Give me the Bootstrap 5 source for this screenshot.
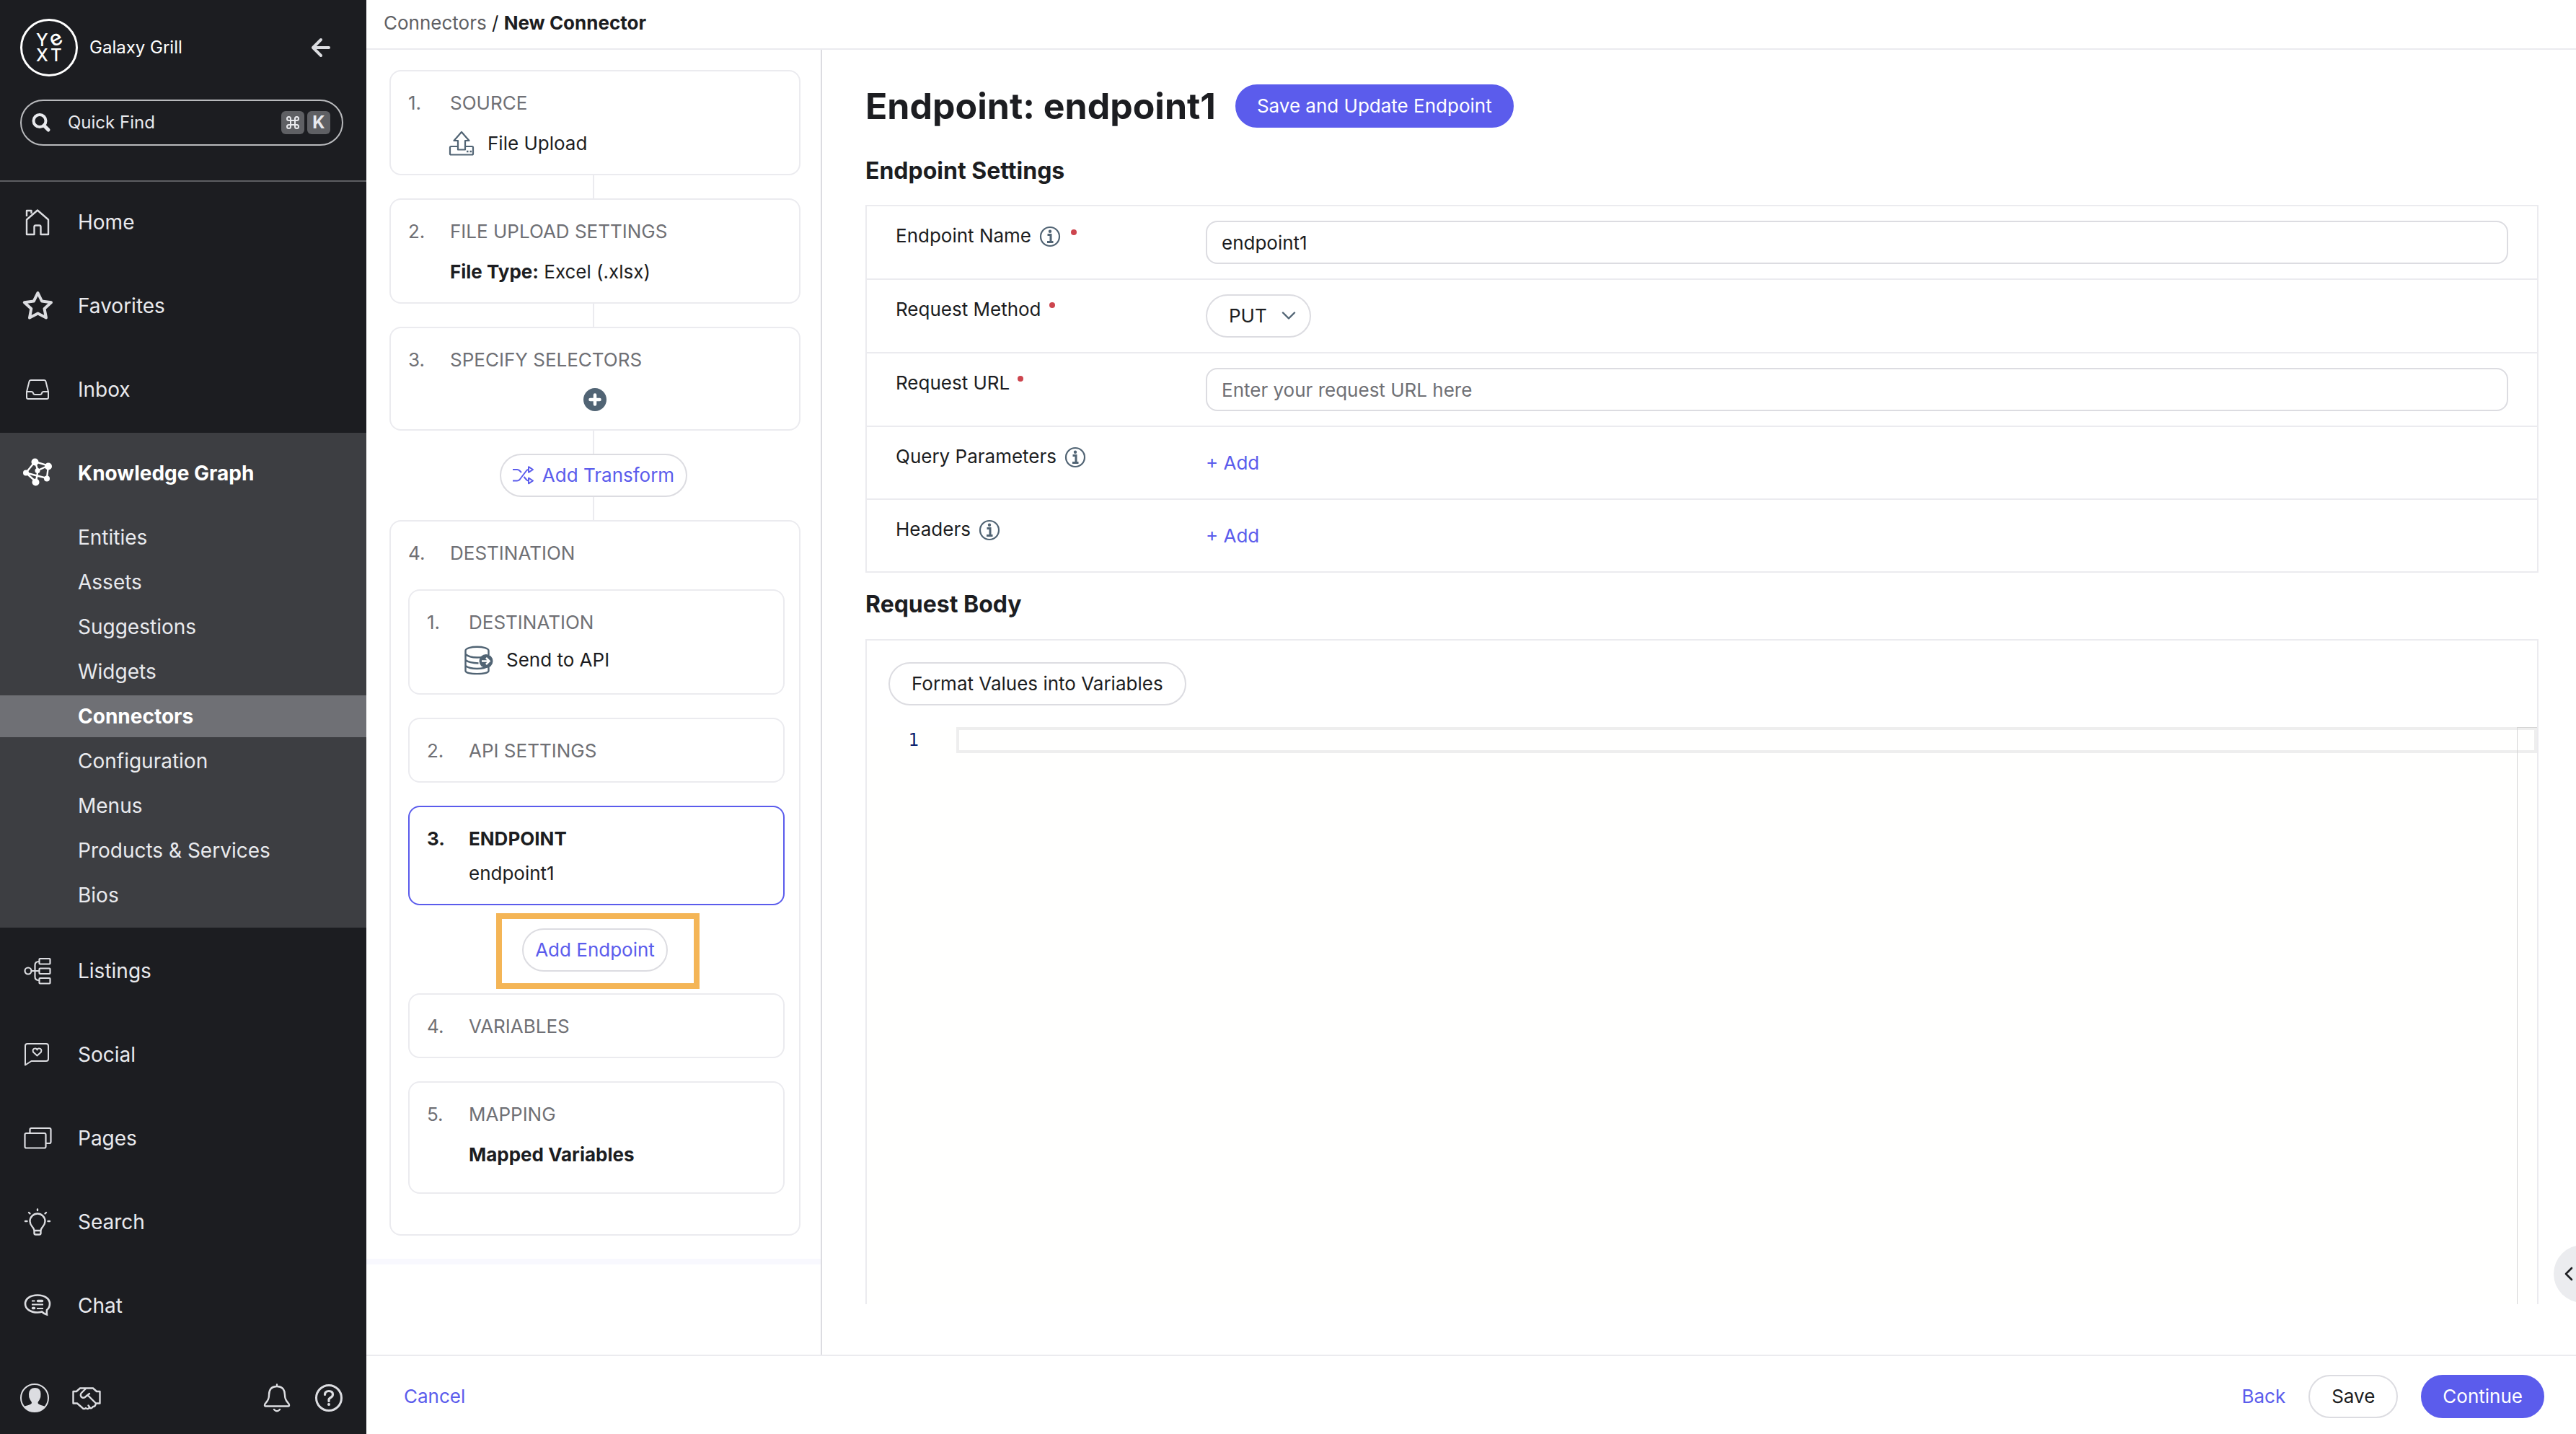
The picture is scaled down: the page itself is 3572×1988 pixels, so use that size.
<!DOCTYPE html>
<html lang="en">
<head>
<meta charset="utf-8">
<meta name="viewport" content="width=device-width, initial-scale=1">
<title>New Connector</title>
<link href="https://cdn.jsdelivr.net/npm/bootstrap@5.3.0/dist/css/bootstrap.min.css" rel="stylesheet">
<style>
:root{
  --ink:#1c1d21; --muted-ink:#6f7075; --brand:#5b5cec; --slate:#516474;
  --line:#ebebef; --line-strong:#dcdce1; --side:#1c1d21; --side-open:#3d3e42; --side-active:#6f7075; --side-ink:#e9eaee;
}
body{font-family:Inter,"Liberation Sans",sans-serif;font-size:26px;line-height:36px;color:var(--ink);background:#fff}
svg{display:block;flex:none;overflow:visible}
a{text-decoration:none}
.app-shell{min-height:100vh}

/* sidebar */
.side-panel{width:508px;background:var(--side);color:var(--side-ink)}
.side-top{padding:26px 32px 48px 28px;border-bottom:2px solid #5d5e62}
.brand-name{font-size:24px;color:#fff;margin-left:16px}
.icon-btn{background:none;border:0;padding:0;color:#dcdde1}
.quick-find{height:64px;margin-top:32px;padding:0 16px 0 14px;border:2px solid #b9babd;border-radius:32px;background:none;color:var(--side-ink);font-size:24px}
.key-cap{width:32px;height:32px;border-radius:6px;background:#5f6064;font-size:24px;line-height:32px;font-weight:700}
.side-nav{font-size:28px}
.side-link{height:112px;margin-bottom:4px;padding-left:28px;color:var(--side-ink)}
.side-link svg{width:48px;height:48px;margin-right:32px;color:#dcdde1}
.side-open{background:var(--side-open);margin-bottom:4px;padding-bottom:12px}
.side-open .side-link,.side-open .side-link svg{color:#fff}
.sub-link{height:58px;margin-bottom:4px;padding-left:108px;color:var(--side-ink)}
.sub-link.active{background:var(--side-active);color:#fff;font-weight:700}
.side-foot{padding:0 32px 30px 28px}

/* top and bottom bars */
.top-bar{height:69px;padding:0 24px 4px;border-bottom:2px solid var(--line)}
.top-bar a{color:#5f6064}
.bottom-bar{padding:26px 44px 22px 52px;border-top:2px solid var(--line)}
.bottom-actions{gap:32px}
.pill{height:60px;padding:0 30px;border:2px solid var(--line-strong);border-radius:30px;background:#fff;color:var(--ink);font-size:26px;line-height:36px}
.pill-brand{background:var(--brand);border-color:var(--brand);color:#fff;padding:0 28px}
.pill-link{color:var(--brand);padding:0 16px}
.text-action{background:none;border:0;padding:0;color:var(--brand);font-size:26px;line-height:36px}

/* steps */
.steps-col{width:632px;border-right:2px solid var(--line-strong)}
.steps-list{padding:28px 28px 32px 32px;border-bottom:8px solid #f8f8fe}
.step-card{padding:26px 24px 24px;border:2px solid var(--line);border-radius:16px;background:#fff}
.step-group{padding:26px 20px 56px 24px}
.step-card.current{border-color:var(--brand)}
.step-no{width:58px}
.step-head{color:var(--muted-ink)}
.current .step-head{color:var(--ink);font-weight:700}
.step-body{margin-top:20px;margin-left:58px;min-height:36px}
.step-body.snug{margin-top:12px}
.step-body svg{margin-right:18px}
.step-body.with-db{margin-left:52px;height:44px}
.step-body.roomy{margin-bottom:10px}
.step-add{margin-top:20px;height:34px}
.stem{height:32px;padding-right:4px}
.stem::before{content:"";width:2px;background:var(--line)}
.stem-item{padding-right:4px}
.inner-steps{margin-top:32px;gap:32px}
.add-spot{margin-bottom:-2px}
.callout-frame{inset:-21px -44px -24px -36px;border:8px solid #f4b556;pointer-events:none}

/* endpoint form */
.work-area{padding:48px 52px 70px 60px}
.work-head{gap:27px;margin-bottom:40px}
.work-title{font-size:50px;line-height:60px;font-weight:700}
.sect-title{font-size:32px;line-height:40px;font-weight:700}
.settings-grid{margin-top:27px;border:2px solid var(--line)}
.set-row{padding:20px 40px;border-bottom:2px solid var(--line)}
.set-row:last-child{border-bottom:0}
.set-label{width:430px;padding-top:3px}
.set-label svg{margin-left:11px}
.req-dot{width:8px;height:8px;border-radius:50%;background:#cd454e;margin:8px 0 0 11px;align-self:flex-start}
.info + .req-dot{margin:9px 0 0 14px}
.field{height:60px;padding:0 20px;border:2px solid var(--line-strong);border-radius:16px;font-size:26px;color:var(--ink)}
.field::placeholder{color:var(--muted-ink);opacity:1}
.row-plain{padding-bottom:19px}
.row-plain .set-val{height:60px}
.method-select{appearance:none;width:146px}
.method-chevron{right:21px;top:24px;pointer-events:none}
.body-panel{margin-top:28px;border:2px solid var(--line);border-bottom:0}
.body-tools{padding:30px}
.code-area{background:#fffffe;min-height:400px;font-family:"DejaVu Sans Mono","Liberation Mono",monospace;font-size:24px}
.code-gutter{width:124px;padding-right:52px;color:#0b216f}
.code-line{height:36px;border:4px solid #eee;background:transparent;resize:none;padding:0 8px;line-height:28px;outline:0;overflow:hidden}
.code-ruler{width:28px;border-left:1px solid #d5d5d5;border-top:1px solid #d5d5d5;pointer-events:none}
.help-tab{right:-49px;bottom:182px;width:80px;height:80px;padding:0 0 0 15px;border:0;border-radius:50%;background:#ebecef}
</style>
</head>
<body class="overflow-x-hidden">
<div class="app-shell d-flex">

  <aside class="side-panel d-flex flex-column flex-shrink-0">
    <div class="side-top">
      <div class="d-flex align-items-center">
        <svg width="80" height="80" viewBox="0 0 80 80" role="img" aria-label="Yext" fill="#fff" font-family="Inter" font-size="24" font-weight="500">
          <circle cx="40" cy="40" r="38.500" fill="none" stroke="#fff" stroke-width="3"/>
          <text><tspan x="22" y="38">Y</tspan><tspan x="46" y="40" rotate="-28" font-size="29">e</tspan><tspan x="22" y="59">X</tspan><tspan x="42" y="59">T</tspan></text>
        </svg>
        <span class="brand-name">Galaxy Grill</span>
        <button class="icon-btn ms-auto me-3" type="button" aria-label="Collapse menu">
          <svg width="28" height="28" viewBox="0 0 28 28" fill="none" stroke="currentColor" stroke-width="4" stroke-linecap="round" stroke-linejoin="round"><path d="M13 3 2 14l11 11M3 14h21"/></svg>
        </button>
      </div>
      <button class="quick-find d-flex align-items-center w-100" type="button">
        <svg width="26" height="26" viewBox="0 0 26 26" fill="none" stroke="currentColor" stroke-width="4"><circle cx="11" cy="10.500" r="8.500"/><path d="m17 17 6 6" stroke-linecap="round" stroke-width="5"/></svg>
        <span class="ms-4">Quick Find</span>
        <span class="key-cap ms-auto d-flex align-items-center justify-content-center">
          <svg width="18" height="18" viewBox="0 0 18 18" fill="none" stroke="currentColor" stroke-width="2"><path d="M6 6h6v6H6zM6 6H3.500A2.500 2.500 0 1 1 6 3.500zM12 6V3.500A2.500 2.500 0 1 1 14.500 6zM12 12h2.500a2.500 2.500 0 1 1-2.500 2.500zM6 12v2.500A2.500 2.500 0 1 1 3.500 12z"/></svg>
        </span>
        <span class="key-cap ms-1 text-center">K</span>
      </button>
    </div>

    <nav class="side-nav d-flex flex-column">
      <a href="#" class="side-link d-flex align-items-center">
        <svg viewBox="0 0 48 48" fill="none" stroke="currentColor" stroke-width="2.400" stroke-linejoin="round"><path d="M9 20.500 24 7.500l15 13V41H28.500V30.500q0-2-2-2h-5q-2 0-2 2V41H9zM9 16V8h6.500v4"/></svg>Home</a>
      <a href="#" class="side-link d-flex align-items-center">
        <svg viewBox="0 0 48 48" fill="none" stroke="currentColor" stroke-width="4" stroke-linejoin="round"><path d="m24.500 6 5.500 11.500 13 1.800-9.500 8.700 2.500 12.500-11.500-6-11.500 6L15.300 28 5.800 19.300l13-1.800z"/></svg>Favorites</a>
      <a href="#" class="side-link d-flex align-items-center">
        <svg viewBox="0 0 48 48" fill="none" stroke="currentColor" stroke-width="2" stroke-linejoin="round"><path d="M15 11h18q2 0 2.500 2L39 27v8q0 2-2 2H11q-2 0-2-2v-8l3.500-14q.5-2 2.500-2zM9 27h6.500q2 0 2.500 2t2.500 2h7q2 0 2.500-2t2.500-2H39"/></svg>Inbox</a>

      <div class="side-open">
        <a href="#" class="side-link d-flex align-items-center fw-bold">
          <svg viewBox="0 0 48 48" fill="none" stroke="currentColor" stroke-width="2.400"><path d="M20.500 8 39 13.500 37 31M22 36 8 23.500 20.500 8l4 12L39 13.500M8 23.500 37 31M24.500 20 22 36"/><g fill="currentColor" stroke="none"><circle cx="20.500" cy="8.500" r="5"/><circle cx="39" cy="14.500" r="5"/><circle cx="37" cy="31.500" r="4"/><circle cx="21.500" cy="36.500" r="5"/><circle cx="8" cy="23.500" r="4"/><circle cx="24" cy="20.500" r="3.500"/></g></svg>Knowledge Graph</a>
        <a href="#" class="sub-link d-flex align-items-center">Entities</a>
        <a href="#" class="sub-link d-flex align-items-center">Assets</a>
        <a href="#" class="sub-link d-flex align-items-center">Suggestions</a>
        <a href="#" class="sub-link d-flex align-items-center">Widgets</a>
        <a href="#" class="sub-link active d-flex align-items-center" aria-current="page">Connectors</a>
        <a href="#" class="sub-link d-flex align-items-center">Configuration</a>
        <a href="#" class="sub-link d-flex align-items-center">Menus</a>
        <a href="#" class="sub-link d-flex align-items-center">Products &amp; Services</a>
        <a href="#" class="sub-link d-flex align-items-center">Bios</a>
      </div>

      <a href="#" class="side-link d-flex align-items-center">
        <svg viewBox="0 0 48 48" fill="none" stroke="currentColor" stroke-width="2.200"><circle cx="11" cy="24" r="4.500"/><path d="M15.500 24H26M26 11q-5.500 0-5.500 5v16q0 5 5.500 5"/><rect x="26.500" y="7" width="15" height="7.500" rx="1"/><rect x="26.500" y="20.500" width="15" height="7.500" rx="1"/><rect x="26.500" y="34" width="15" height="7.500" rx="1"/></svg>Listings</a>
      <a href="#" class="side-link d-flex align-items-center">
        <svg viewBox="0 0 48 48" fill="none" stroke="currentColor" stroke-width="2" stroke-linejoin="round"><path d="M7 38.500V12q0-3 3-3h26q3 0 3 3v18q0 3-3 3H15.500z"/><path d="M23.500 25.500 18 20.500q-1.500-5 3-5 2 0 2.500 2 .5-2 2.500-2 4.500 0 3 5z"/></svg>Social</a>
      <a href="#" class="side-link d-flex align-items-center">
        <svg viewBox="0 0 48 48" fill="none" stroke="currentColor" stroke-width="2.200"><rect x="6.500" y="17" width="29" height="20.500" rx="2"/><path d="M13.500 16.500V12q0-2 2-2h25q2 0 2 2v17q0 2-2 2h-4.500"/></svg>Pages</a>
      <a href="#" class="side-link d-flex align-items-center">
        <svg viewBox="0 0 48 48" fill="none" stroke="currentColor" stroke-width="2.400" stroke-linecap="round" stroke-linejoin="round"><path d="M24 12.500A10.500 10.500 0 0 0 13.500 23c0 7 5.500 8 6 13v3.500q0 2 2 2h5q2 0 2-2V36c.5-5 6-6 6-13A10.500 10.500 0 0 0 24 12.500zM20 36h8M24 6.500v1.500M12 11l1.500 1.500M36 11l-1.500 1.500M7 23h2.500M38.500 23H41"/></svg>Search</a>
      <a href="#" class="side-link d-flex align-items-center mb-0">
        <svg viewBox="0 0 48 48" fill="none" stroke="currentColor" stroke-width="2.600"><path d="M24 9.500c-10 0-17 5-17 12s7 12 17 12q3 0 6-1 3 3 7 4-.5-4 0-6.500c2.500-2 4-5 4-8.500 0-7-7-12-17-12z"/><path d="M16 17.500h4.500M16 22.500h16M23 28h9" stroke-width="2"/><path d="M24.500 17.500h6M17.500 27.500h2" stroke-width="3.500" stroke-linecap="round"/></svg>Chat</a>
    </nav>

    <div class="side-foot d-flex align-items-center mt-auto">
      <button class="icon-btn" type="button" aria-label="Account">
        <svg width="40" height="40" viewBox="0 0 40 40"><circle cx="20" cy="20" r="19" fill="none" stroke="currentColor" stroke-width="2"/><path fill="currentColor" d="M4.500 32.500C8 30 16 30 16 26.500q-.5-2-2-3.500-2.500-4-2-8.500.5-8.500 8.500-8.500t8 8.500q.5 4.500-2 8.500-1.500 1.500-2 3.500c0 3.500 7.500 3.500 11 6Q29 39 20 39T4.500 32.500z"/></svg>
      </button>
      <button class="icon-btn ms-4 ps-2" type="button" aria-label="Partners">
        <svg width="40" height="40" viewBox="0 0 40 40" fill="none" stroke="currentColor" stroke-width="2.400" stroke-linejoin="round" stroke-linecap="round"><path d="M1.500 11H6L11 6.500h18l5 4.500h4.500V27.500H33q-1 5-4 4.500-2 3.500-5 1.500-2.500 3-5 .5-3 2.500-5-.5L7 27.500H1.500zM19 7l-6.500 6.500q-2 4 1.500 6 3 1 5-1.500l5-4M22 16.500 32.500 27M24.500 33l-2-2.500"/></svg>
      </button>
      <button class="icon-btn ms-auto" type="button" aria-label="Notifications">
        <svg width="40" height="40" viewBox="0 0 40 40" fill="none" stroke="currentColor" stroke-width="2.400" stroke-linejoin="round" stroke-linecap="round"><path d="M20 1.500V4M20 4C11 4 9 10 9 16c0 10-6 10-6 14q0 1.500 1.500 1.500h31Q37 31.500 37 30c0-4-6-4-6-14C31 10 29 4 20 4zM16 36q4 4.500 8 0"/></svg>
      </button>
      <button class="icon-btn ms-4 ps-2" type="button" aria-label="Help">
        <svg width="40" height="40" viewBox="0 0 40 40" fill="none" stroke="currentColor" stroke-width="3"><circle cx="20" cy="20" r="17.500"/><path d="M14.500 15.500q0-5 5.500-5t5.500 4.500q0 3-3 4.500T20 23.500v1" stroke-linecap="round" stroke-width="3.200"/><circle cx="20" cy="29" r="2" fill="currentColor" stroke="none"/></svg>
      </button>
    </div>
  </aside>

  <div class="d-flex flex-column flex-grow-1">
    <header class="top-bar d-flex align-items-center">
      <nav aria-label="breadcrumb"><a href="#">Connectors</a> / <b>New Connector</b></nav>
    </header>

    <div class="d-flex flex-grow-1">
      <section class="steps-col flex-shrink-0">
        <div class="steps-list">
          <div class="step-card">
            <div class="step-head d-flex"><span class="step-no">1.</span>SOURCE</div>
            <div class="step-body d-flex align-items-center">
              <svg width="34" height="36" viewBox="1 0 34 36" fill="none" stroke="#516474" stroke-width="2.200" stroke-linejoin="round"><path d="M12 22H2.500Q1 22 1 23.500V32q0 1.500 1.500 1.500h29q1.500 0 1.500-1.500v-8.500q0-1.500-1.500-1.500H22M12 26.500V14H6.500L17 2l10.500 12H22v12.500z"/><path d="M24 29h2.500M28.500 29H31" stroke-width="2.600"/></svg>
              File Upload
            </div>
          </div>
          <div class="stem d-flex justify-content-center"></div>
          <div class="step-card">
            <div class="step-head d-flex"><span class="step-no">2.</span>FILE UPLOAD SETTINGS</div>
            <div class="step-body"><b>File Type:</b> Excel (.xlsx)</div>
          </div>
          <div class="stem d-flex justify-content-center"></div>
          <div class="step-card">
            <div class="step-head d-flex"><span class="step-no">3.</span>SPECIFY SELECTORS</div>
            <div class="step-add d-flex justify-content-center">
              <button class="icon-btn" type="button" aria-label="Add selector">
                <svg width="32" height="32" viewBox="0 0 32 32"><circle cx="16" cy="16" r="16" fill="#516474"/><path d="M16 9.500v13M9.500 16h13" stroke="#fff" stroke-width="4.500" stroke-linecap="round"/></svg>
              </button>
            </div>
          </div>
          <div class="stem d-flex justify-content-center"></div>
          <div class="stem-item d-flex justify-content-center">
            <button class="pill pill-link d-flex align-items-center" type="button">
              <svg width="29" height="26" viewBox="0 0 29 26" fill="none" stroke="currentColor" stroke-width="2" stroke-linejoin="round"><path d="M0 5h6q2 0 3.500 1.500L12 9M0 20.500h6q2 0 3.500-1.500L19 6.500Q20 5 22 5M15.500 15l3.500 4q1 1.500 3 1.500M22 1.200v7.600L28 5zM22 16.700v7.600l6-3.800z"/></svg>
              <span class="ms-2 ps-1">Add Transform</span>
            </button>
          </div>
          <div class="stem d-flex justify-content-center"></div>

          <div class="step-card step-group">
            <div class="step-head d-flex"><span class="step-no">4.</span>DESTINATION</div>
            <div class="inner-steps d-flex flex-column">
              <div class="step-card">
                <div class="step-head d-flex"><span class="step-no">1.</span>DESTINATION</div>
                <div class="step-body snug with-db d-flex align-items-center">
                  <svg width="40" height="40" viewBox="0 0 40 40" fill="none" stroke="#516474" stroke-width="2.400"><path d="M1.500 7v28c0 5.500 32 5.500 32 0v-7M33.500 7v6M1.500 7c0-7 32-7 32 0M1.500 12q5 4.500 16 4.500 8 0 12-1.500M1.500 20q5 4 18 4.500M1.500 28q5 4 16 4t16-4"/><circle cx="30" cy="21.500" r="9.500" fill="#516474" stroke="none"/><path d="M24 21.500h10M30 17l4.500 4.500L30 26" stroke="#fff" stroke-width="2.600"/></svg>
                  Send to API
                </div>
              </div>
              <div class="step-card">
                <div class="step-head d-flex"><span class="step-no">2.</span>API SETTINGS</div>
              </div>
              <div class="step-card current">
                <div class="step-head d-flex"><span class="step-no">3.</span>ENDPOINT</div>
                <div class="step-body snug">endpoint1</div>
              </div>
              <div class="add-spot stem-item d-flex justify-content-center">
                <div class="position-relative">
                  <button class="pill pill-link" type="button">Add Endpoint</button>
                  <div class="callout-frame position-absolute"></div>
                </div>
              </div>
              <div class="step-card">
                <div class="step-head d-flex"><span class="step-no">4.</span>VARIABLES</div>
              </div>
              <div class="step-card">
                <div class="step-head d-flex"><span class="step-no">5.</span>MAPPING</div>
                <div class="step-body roomy"><b>Mapped Variables</b></div>
              </div>
            </div>
          </div>
        </div>
      </section>

      <main class="work-area d-flex flex-column flex-grow-1">
        <div class="work-head d-flex align-items-center">
          <h1 class="work-title mb-0">Endpoint: endpoint1</h1>
          <button class="pill pill-brand" type="button">Save and Update Endpoint</button>
        </div>
        <h2 class="sect-title mb-0">Endpoint Settings</h2>
        <div class="settings-grid">
          <div class="set-row d-flex">
            <label class="set-label d-flex flex-shrink-0" for="ep-name">Endpoint Name
              <svg class="info" width="30" height="36" viewBox="0 -4 30 36" fill="none" stroke="#516474" stroke-width="2.200"><circle cx="15" cy="15" r="13"/><path d="M11.500 12.500h4.500v9.500M11 22.500h8.500" stroke-width="3"/><circle cx="15" cy="7.800" r="2.200" fill="#516474" stroke="none"/></svg>
              <span class="req-dot"></span></label>
            <input class="field flex-grow-1" id="ep-name" type="text" value="endpoint1">
          </div>
          <div class="set-row d-flex">
            <label class="set-label d-flex flex-shrink-0" for="ep-method">Request Method<span class="req-dot"></span></label>
            <div class="position-relative">
              <select class="pill method-select" id="ep-method"><option>PUT</option><option>POST</option><option>GET</option></select>
              <svg class="method-chevron position-absolute" width="20" height="12" viewBox="0 0 20 12" fill="none" stroke="#516474" stroke-width="2.400" stroke-linecap="round" stroke-linejoin="round"><path d="m2 1.500 8 8 8-8"/></svg>
            </div>
          </div>
          <div class="set-row d-flex">
            <label class="set-label d-flex flex-shrink-0" for="ep-url">Request URL<span class="req-dot"></span></label>
            <input class="field flex-grow-1" id="ep-url" type="text" placeholder="Enter your request URL here">
          </div>
          <div class="set-row row-plain d-flex">
            <div class="set-label d-flex flex-shrink-0">Query Parameters
              <svg class="info" width="30" height="36" viewBox="0 -4 30 36" fill="none" stroke="#516474" stroke-width="2.200"><circle cx="15" cy="15" r="13"/><path d="M11.500 12.500h4.500v9.500M11 22.500h8.500" stroke-width="3"/><circle cx="15" cy="7.800" r="2.200" fill="#516474" stroke="none"/></svg></div>
            <div class="set-val d-flex align-items-center"><button class="text-action" type="button">+ Add</button></div>
          </div>
          <div class="set-row row-plain d-flex">
            <div class="set-label d-flex flex-shrink-0">Headers
              <svg class="info" width="30" height="36" viewBox="0 -4 30 36" fill="none" stroke="#516474" stroke-width="2.200"><circle cx="15" cy="15" r="13"/><path d="M11.500 12.500h4.500v9.500M11 22.500h8.500" stroke-width="3"/><circle cx="15" cy="7.800" r="2.200" fill="#516474" stroke="none"/></svg></div>
            <div class="set-val d-flex align-items-center"><button class="text-action" type="button">+ Add</button></div>
          </div>
        </div>

        <h2 class="sect-title mt-4 mb-0">Request Body</h2>
        <div class="body-panel d-flex flex-column flex-grow-1">
          <div class="body-tools"><button class="pill d-block" type="button">Format Values into Variables</button></div>
          <div class="code-area position-relative d-flex align-items-start flex-grow-1">
            <label class="code-gutter text-end flex-shrink-0" for="req-body">1</label>
            <textarea class="code-line flex-grow-1" id="req-body" rows="1"></textarea>
            <div class="code-ruler position-absolute top-0 bottom-0 end-0"></div>
          </div>
        </div>
      </main>
    </div>

    <footer class="bottom-bar d-flex align-items-center">
      <button class="text-action me-auto" type="button">Cancel</button>
      <div class="bottom-actions d-flex align-items-center">
        <button class="text-action" type="button">Back</button>
        <button class="pill" type="button">Save</button>
        <button class="pill pill-brand" type="button">Continue</button>
      </div>
    </footer>
  </div>
</div>

<button class="help-tab position-fixed" type="button" aria-label="Open help panel">
  <svg width="12" height="20" viewBox="0 0 12 20" fill="none" stroke="#1c1d21" stroke-width="2.600" stroke-linecap="round" stroke-linejoin="round"><path d="m10 2-8 8 8 8"/></svg>
</button>
<script src="https://cdn.jsdelivr.net/npm/bootstrap@5.3.0/dist/js/bootstrap.bundle.min.js"></script>
</body>
</html>
